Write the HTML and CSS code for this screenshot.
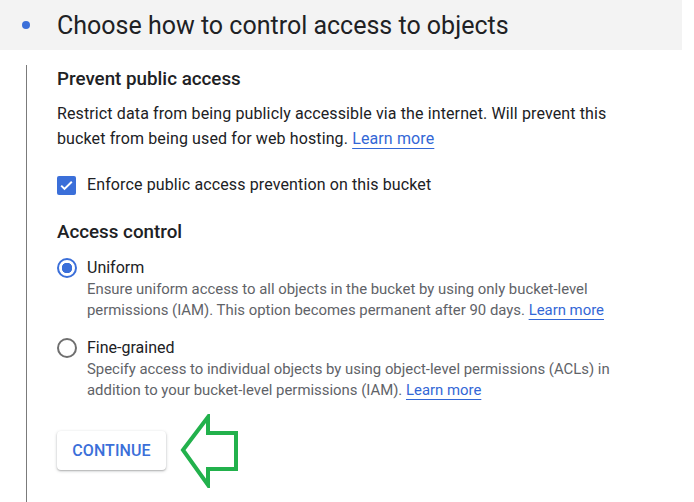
FILE: index.html
```html
<!DOCTYPE html>
<html lang="en">
<head>
    <meta charset="UTF-8">
    <title>Choose how to control access to objects</title>
    <link rel="stylesheet" href="styles.css">
</head>
<body>
    <header class="step">
        <span class="step__dot"></span>
        <h1 class="step__title">Choose how to control access to objects</h1>
    </header>
    <main class="panel">
        <h2 class="panel__head">Prevent public access</h2>
        <p class="panel__text">Restrict data from being publicly accessible via the internet. Will prevent this bucket from being used for web hosting. <a href="#">Learn more</a></p>
        <label class="check">
            <span class="check__box">
                <svg viewBox="0 0 19 19" width="19" height="19"><path d="M4.2 9.6l3.3 3.3L14.8 5.8" fill="none" stroke="#fff" stroke-width="2"/></svg>
            </span>
            Enforce public access prevention on this bucket
        </label>
        <h2 class="panel__head panel__head--access">Access control</h2>
        <div class="opt">
            <span class="radio radio--on"></span>
            <div class="opt__body">
                <div class="opt__label">Uniform</div>
                <div class="opt__desc">Ensure uniform access to all objects in the bucket by using only bucket-level permissions (IAM). This option becomes permanent after 90 days. <a href="#">Learn more</a></div>
            </div>
        </div>
        <div class="opt">
            <span class="radio"></span>
            <div class="opt__body">
                <div class="opt__label">Fine-grained</div>
                <div class="opt__desc">Specify access to individual objects by using object-level permissions (ACLs) in addition to your bucket-level permissions (IAM). <a href="#">Learn more</a></div>
            </div>
        </div>
        <div class="actions">
            <button class="btn">Continue</button>
            <svg class="arrow" width="60" height="74" viewBox="0 0 60 74">
                <polygon points="3,36 28,3 28,19 56,19 56,55 28,55 28,71" fill="none" stroke="#22b14c" stroke-width="4" stroke-linejoin="miter"/>
            </svg>
        </div>
    </main>
</body>
</html>
```

FILE: styles.css
```css
body {
    margin: 0;
    width: 694px;
    height: 502px;
    overflow: hidden;
    background: #fff;
    color: #202124;
    font-family: Roboto, "Liberation Sans", sans-serif;
}

.step {
    display: flex;
    align-items: center;
    width: 682px;
    height: 50px;
    background: #f3f3f3;
}

.step__dot {
    width: 8px;
    height: 8px;
    margin: 0 27px 0 22px;
    border-radius: 50%;
    background: #3b6fd9;
}

.step__title {
    margin: 0;
    font-size: 25px;
    font-weight: 400;
}

.panel {
    margin: 15px 0 0 26px;
    padding: 0 0 40px 30px;
    border-left: 1px solid #7b7b7b;
    height: 420px;
}

.panel__head {
    margin: 0;
    padding-top: 2px;
    font-size: 18.8px;
    font-weight: 500;
    line-height: 24px;
}

.panel__head--access {
    padding-top: 25px;
}

.panel__text {
    margin: 10px 0 0;
    max-width: 580px;
    font-size: 16px;
    letter-spacing: .12px;
    line-height: 25px;
}

a {
    color: #3367d6;
    text-decoration: underline;
    text-decoration-thickness: 1px;
    text-underline-offset: 4px;
}

.check {
    display: flex;
    align-items: center;
    gap: 11px;
    margin-top: 24px;
    font-size: 16px;
    letter-spacing: .12px;
    line-height: 20px;
}

.check__box {
    display: flex;
    width: 19px;
    height: 19px;
    border-radius: 2px;
    background: #3b6fd9;
}

.opt {
    display: flex;
    gap: 10px;
    margin-top: 13px;
}

.opt + .opt {
    margin-top: 17px;
}

.radio {
    flex: none;
    box-sizing: border-box;
    width: 20px;
    height: 20px;
    margin-top: 1px;
    border: 2px solid #6f6f6f;
    border-radius: 50%;
}

.radio--on {
    border-color: #3b6fd9;
    background: radial-gradient(circle, #3b6fd9 0 5px, transparent 5.5px);
}

.opt__label {
    font-size: 16px;
    line-height: 22px;
}

.opt__desc {
    max-width: 540px;
    color: #5f6368;
    font-size: 14.9px;
    line-height: 20.5px;
}

.actions {
    display: flex;
    align-items: center;
    gap: 14px;
    margin-top: 12px;
}

.btn {
    width: 109px;
    height: 39px;
    border: 0;
    border-radius: 4px;
    background: #fff;
    box-shadow: 0 1px 3px rgba(60, 64, 67, .35), 0 1px 1px rgba(60, 64, 67, .15);
    color: #3b6fd9;
    font-family: inherit;
    font-size: 16px;
    font-weight: 500;
    letter-spacing: .1px;
    text-transform: uppercase;
}

.arrow {
    margin-top: 2px;
}
```
